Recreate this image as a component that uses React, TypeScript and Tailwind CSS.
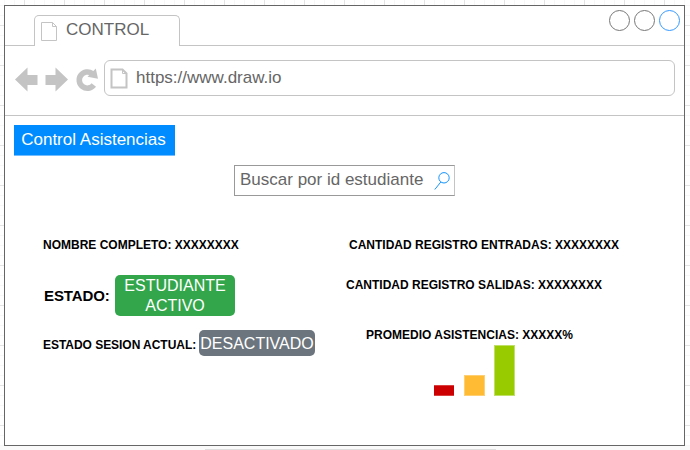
import type { ReactNode } from "react";

function PageIcon({ className, stroke }: { className: string; stroke: number }) {
  return (
    <svg className={className} viewBox="0 0 18 21" fill="none" stroke="#c4c4c4" strokeWidth={stroke}>
      <path d="M1.5 1.5H12.500L16.500 5.500V19.500H1.500Z" />
      <path d="M12.500 1.500V5.500H16.500" strokeWidth="1" />
    </svg>
  );
}

function Label({ children, className = "" }: { children: ReactNode; className?: string }) {
  return <div className={`h-5 whitespace-nowrap text-[12px] leading-5 font-bold text-black ${className}`}>{children}</div>;
}

function BrowserTabs() {
  return (
    <header className="flex h-10 shrink-0 justify-between border-b border-[#c4c4c4]">
      <div className="-mb-px mt-[9px] ml-[29px] flex h-[31px] w-[146px] rounded-t-[5px] border border-b-0 border-[#c4c4c4] bg-white">
        <PageIcon className="mt-[5px] ml-[5px] h-[21px] w-[18px]" stroke={1} />
        <span className="ml-[8px] text-[17px] leading-[27px] text-[#666]">CONTROL</span>
      </div>
      <div className="mt-1 mr-1 flex gap-1">
        <i className="size-[21px] rounded-full border border-[#777]" />
        <i className="size-[21px] rounded-full border border-[#777]" />
        <i className="size-[21px] rounded-full border border-[#3399ff]" />
      </div>
    </header>
  );
}

function Toolbar() {
  return (
    <div className="flex h-[70px] shrink-0 border-b border-[#c4c4c4]">
      <svg className="mt-[20px] ml-[9px] h-[26px] w-[86px]" viewBox="0 0 86 26" fill="#c4c4c4">
        <path d="M1 13.500L13.500 1.500V9H23.500V19H13.500V25.500Z" />
        <path d="M54 13.500L41.500 1.500V9H31.500V19H41.500V25.500Z" />
        <path d="M79.800 19A8.100 8.100 0 1 1 78.200 7.600" fill="none" stroke="#c4c4c4" strokeWidth="5.600" />
        <path d="M81.800 2.500L84 12.800L73.500 10.800Z" />
      </svg>
      <div className="mt-[14px] ml-[4px] flex h-9 w-[571px] rounded-[6px] border border-[#c4c4c4]">
        <PageIcon className="mt-[7px] ml-[5px] h-[21px] w-[18px]" stroke={2} />
        <span className="ml-[8px] text-[17px] leading-[33px] text-[#666]">https://www.draw.io</span>
      </div>
    </div>
  );
}

function AttendanceChart() {
  return (
    <div className="ml-[88px] flex h-[51px] items-end">
      <div className="mr-[10px] h-[11px] w-5 border-y border-[#d94040] bg-[#cc0000]" />
      <div className="mr-[9px] h-[21px] w-[21px] border border-[#ffcf73] bg-[#ffbb33]" />
      <div className="h-[51px] w-[21px] border border-[#bfdf66] bg-[#99cc00]" />
    </div>
  );
}

export default function App() {
  return (
    <div
      className="relative h-[450px] w-[690px] overflow-hidden bg-white pt-[5px] pl-1"
      style={{ fontFamily: '"Liberation Sans", Arial, sans-serif' }}
    >
      <svg className="absolute inset-0" width="690" height="450">
        <defs>
          <pattern id="grid" x="24" y="25" width="40" height="40" patternUnits="userSpaceOnUse">
            <path d="M10.500 0V40M20.500 0V40M30.500 0V40M0 10.500H40M0 20.500H40M0 30.500H40" stroke="#f7f7f7" />
            <path d="M.5 0V40M0 .5H40" stroke="#e4e4e4" />
          </pattern>
        </defs>
        <rect width="690" height="446" fill="url(#grid)" />
        <rect y="446" width="690" height="4" fill="#fafafa" />
        <rect x="205" y="449" width="291" height="1" fill="#dedede" />
      </svg>
      <div className="relative flex h-[441px] w-[681px] flex-col border border-[#666] bg-white">
        <BrowserTabs />
        <Toolbar />
        <main className="flex flex-col">
          <button className="mt-[9px] ml-[9px] h-[31px] w-[161px] border-b border-[#73bdff] bg-[#008cff] pr-[2px] pb-px text-[17px] leading-[28px] whitespace-nowrap text-white">
            Control Asistencias
          </button>
          <div className="mt-[9px] ml-[229px] flex h-[31px] w-[221px] border border-[#999] border-r-[#c4c4c4] pl-[5px]">
            <span className="text-[17px] leading-[28px] whitespace-nowrap text-[#666]">Buscar por id estudiante</span>
            <svg className="mt-[5px] ml-auto mr-[3px] h-5 w-[17px]" viewBox="0 0 17 20" fill="none" stroke="#1695ff">
              <circle cx="10" cy="6.800" r="5.200" />
              <path d="M6.800 11L.8 18.500" />
            </svg>
          </div>
          <div className="mt-[39px] flex">
            <section className="w-[341px] shrink-0 pl-[38px]">
              <Label>NOMBRE COMPLETO: XXXXXXXX</Label>
              <div className="mt-5 flex h-[41px]">
                <span className="w-[72px] pl-px text-[15px] leading-[41px] font-bold tracking-[-0.1px] whitespace-nowrap text-black">ESTADO:</span>
                <div className="h-[41px] w-[120px] rounded-[5px] bg-[#33a64c] pt-px text-center text-[16px] leading-[20px] text-white">
                  ESTUDIANTE
                  <br />
                  ACTIVO
                </div>
              </div>
              <div className="mt-[14px] flex h-[26px]">
                <Label className="mt-[5px] w-[156px] tracking-[-0.04px]">ESTADO SESION ACTUAL:</Label>
                <div className="flex h-[26px] w-[116px] justify-center rounded-[5px] bg-[#6c757d] text-[16px] leading-[27px] whitespace-nowrap text-white">
                  DESACTIVADO
                </div>
              </div>
            </section>
            <section>
              <Label className="pl-[3px]">CANTIDAD REGISTRO ENTRADAS: XXXXXXXX</Label>
              <Label className="mt-5">CANTIDAD REGISTRO SALIDAS: XXXXXXXX</Label>
              <Label className="mt-[30px] pl-5">PROMEDIO ASISTENCIAS: XXXXX%</Label>
              <AttendanceChart />
            </section>
          </div>
        </main>
      </div>
    </div>
  );
}
